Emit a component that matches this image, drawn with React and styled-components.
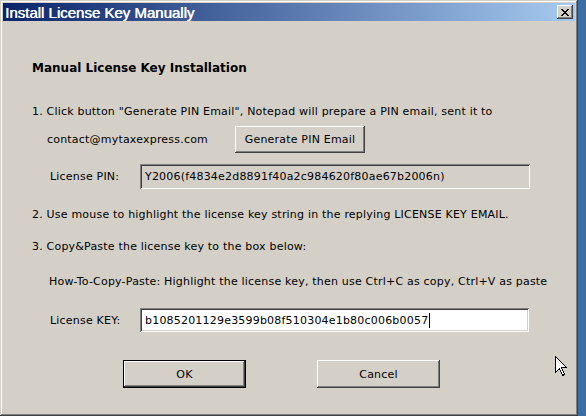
import React from "react";
import styled, { createGlobalStyle } from "styled-components";

const Global = createGlobalStyle`
  html, body { margin: 0; padding: 0; background: #3a6ea5; }
  body { width: 586px; height: 416px; overflow: hidden; }
`;

const Window = styled.div`
  position: relative;
  box-sizing: border-box;
  width: 578px;
  height: 416px;
  padding: 3px;
  background: #d4d0c8;
  box-shadow: inset -1px -1px #404040, inset 1px 1px #d4d0c8,
    inset -2px -2px #808080, inset 2px 2px #ffffff;
  display: flex;
  flex-direction: column;
  font-family: "DejaVu Sans", sans-serif;
  font-size: 11px;
  letter-spacing: 0.2px;
  color: #000;
`;

const TitleBar = styled.div`
  height: 18px;
  display: flex;
  align-items: center;
  justify-content: space-between;
  padding: 0 2px 0 2px;
  background: linear-gradient(to right, #0a246a, #a6caf0);
`;

const TitleText = styled.span`
  color: #fff;
  font-family: "Liberation Sans", sans-serif;
  font-weight: normal;
  font-size: 15px;
  letter-spacing: 0px;
  text-shadow: 0.5px 0 0 #fff;
  white-space: nowrap;
`;

const CloseButton = styled.div`
  box-sizing: border-box;
  width: 16px;
  height: 14px;
  background: #d4d0c8;
  box-shadow: inset -1px -1px #404040, inset 1px 1px #ffffff,
    inset -2px -2px #808080, inset 2px 2px #d4d0c8;
  display: flex;
  align-items: center;
  justify-content: center;
`;

const Content = styled.div`
  display: flex;
  flex-direction: column;
  padding-left: 29px;
`;

const Row = styled.div`
  display: flex;
  align-items: center;
  height: ${(p) => p.$h || 20}px;
  margin-top: ${(p) => p.$mt || 0}px;
  padding-left: ${(p) => p.$indent || 0}px;
  white-space: nowrap;
`;

const Heading = styled.span`
  font-weight: bold;
  font-size: 12px;
  letter-spacing: 0;
`;

const Label = styled.span`
  display: inline-block;
  width: ${(p) => p.$w}px;
  flex: none;
`;

const Field = styled.div`
  box-sizing: border-box;
  width: ${(p) => p.$w}px;
  height: ${(p) => p.$h}px;
  padding-left: 5px;
  display: flex;
  align-items: center;
  background: ${(p) => (p.$readonly ? "#d4d0c8" : "#ffffff")};
  box-shadow: inset 1px 1px #808080, inset -1px -1px #ffffff,
    inset 2px 2px #404040, inset -2px -2px #d4d0c8;
`;

const Caret = styled.span`
  display: inline-block;
  width: 1px;
  height: 15px;
  background: #000;
  margin-left: 1px;
`;

const Button = styled.button`
  box-sizing: border-box;
  width: ${(p) => p.$w}px;
  height: ${(p) => p.$h}px;
  margin-left: ${(p) => p.$ml || 0}px;
  border: none;
  padding: 0;
  background: #d4d0c8;
  font-family: inherit;
  font-size: 11px;
  letter-spacing: 0.2px;
  color: #000;
  box-shadow: ${(p) =>
    p.$default
      ? "inset -1px -1px #000, inset 1px 1px #000, inset -2px -2px #404040, inset 2px 2px #fff, inset -3px -3px #808080"
      : "inset -1px -1px #404040, inset 1px 1px #ffffff, inset -2px -2px #808080, inset 2px 2px #d4d0c8"};
`;

const Pointer = styled.svg`
  position: absolute;
  left: 555px;
  top: 356px;
`;

export default function App() {
  return (
    <>
      <Global />
      <Window>
        <TitleBar>
          <TitleText>Install License Key Manually</TitleText>
          <CloseButton>
            <svg width="8" height="7" viewBox="0 0 8 7" shapeRendering="crispEdges">
              <path
                d="M0 0h2v1h-2z M6 0h2v1h-2z M1 1h2v1h-2z M5 1h2v1h-2z M2 2h4v1h-4z M3 3h2v1h-2z M2 4h4v1h-4z M1 5h2v1h-2z M5 5h2v1h-2z M0 6h2v1h-2z M6 6h2v1h-2z"
                fill="#000"
              />
            </svg>
          </CloseButton>
        </TitleBar>
        <Content>
          <Row $mt={37}>
            <Heading>Manual License Key Installation</Heading>
          </Row>
          <Row $mt={23}>
            1. Click button "Generate PIN Email", Notepad will prepare a PIN email, sent it to
          </Row>
          <Row $mt={5} $h={27} $indent={15}>
            <Label $w={188}>contact@mytaxexpress.com</Label>
            <Button $w={130} $h={27}>Generate PIN Email</Button>
          </Row>
          <Row $mt={11} $h={25} $indent={18}>
            <Label $w={90}>License PIN:</Label>
            <Field $w={390} $h={25} $readonly>
              Y2006(f4834e2d8891f40a2c984620f80ae67b2006n)
            </Field>
          </Row>
          <Row $mt={15}>
            2. Use mouse to highlight the license key string in the replying LICENSE KEY EMAIL.
          </Row>
          <Row $mt={12}>3. Copy&amp;Paste the license key to the box below:</Row>
          <Row $mt={15} $indent={17}>
            How-To-Copy-Paste: Highlight the license key, then use Ctrl+C as copy, Ctrl+V as paste
          </Row>
          <Row $mt={17} $h={24} $indent={18}>
            <Label $w={90}>License KEY:</Label>
            <Field $w={389} $h={24}>
              b1085201129e3599b08f510304e1b80c006b0057
              <Caret />
            </Field>
          </Row>
          <Row $mt={28} $h={28} $indent={91}>
            <Button $w={123} $h={28} $default>OK</Button>
            <Button $w={123} $h={28} $ml={71}>Cancel</Button>
          </Row>
        </Content>
        <Pointer width="13" height="21" viewBox="0 0 13 21" shapeRendering="crispEdges">
          <path
            d="M0.5 0.5 L0.5 16.5 L4.5 12.5 L7.5 19.5 L9.5 18.5 L6.5 11.5 L11.5 11.5 Z"
            fill="#fff"
            stroke="#000"
            strokeWidth="1"
          />
        </Pointer>
      </Window>
    </>
  );
}
